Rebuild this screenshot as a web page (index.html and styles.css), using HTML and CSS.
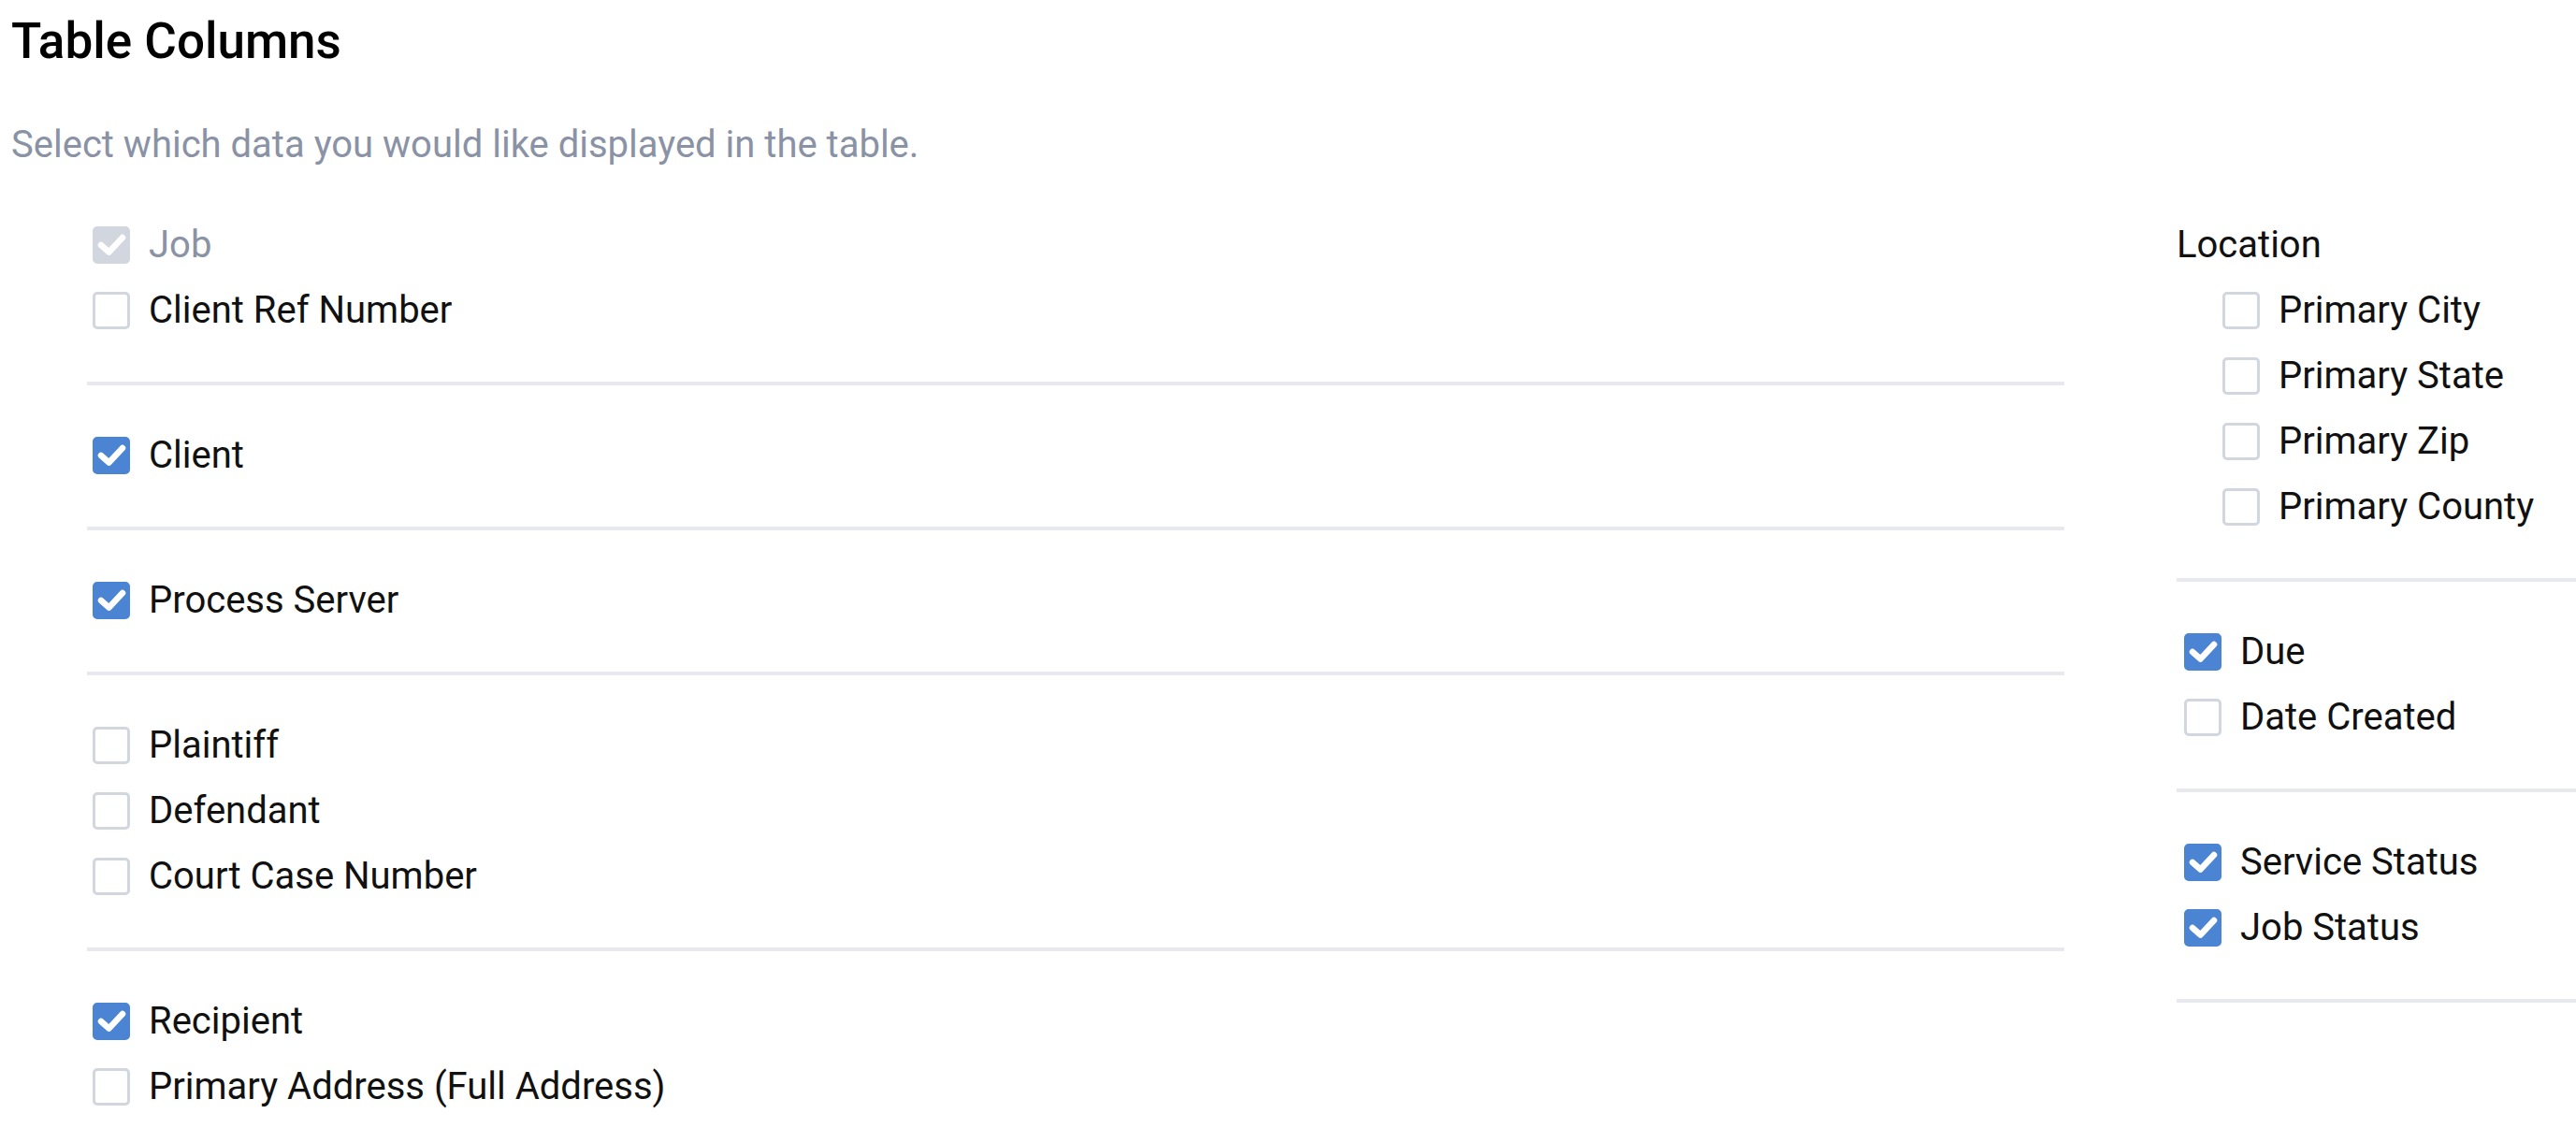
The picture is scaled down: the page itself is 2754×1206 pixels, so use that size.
FILE: index.html
```html
<!DOCTYPE html>
<html lang="en">
<head>
<meta charset="utf-8">
<title>Table Columns</title>
<link rel="stylesheet" href="styles.css">
</head>
<body>
<div class="page">
  <h1 class="title">Table Columns</h1>
  <p class="subtitle">Select which data you would like displayed in the table.</p>

  <div class="columns">
    <div class="col col-left">
      <div class="section">
        <label class="row disabled"><span class="box checked"><svg viewBox="0 0 40 40"><polyline points="9,20 17.5,27.5 32,12"/></svg></span><span class="text">Job</span></label>
        <label class="row"><span class="box"></span><span class="text">Client Ref Number</span></label>
      </div>
      <div class="section">
        <label class="row"><span class="box checked"><svg viewBox="0 0 40 40"><polyline points="9,20 17.5,27.5 32,12"/></svg></span><span class="text">Client</span></label>
      </div>
      <div class="section">
        <label class="row"><span class="box checked"><svg viewBox="0 0 40 40"><polyline points="9,20 17.5,27.5 32,12"/></svg></span><span class="text">Process Server</span></label>
      </div>
      <div class="section">
        <label class="row"><span class="box"></span><span class="text">Plaintiff</span></label>
        <label class="row"><span class="box"></span><span class="text">Defendant</span></label>
        <label class="row"><span class="box"></span><span class="text">Court Case Number</span></label>
      </div>
      <div class="section">
        <label class="row"><span class="box checked"><svg viewBox="0 0 40 40"><polyline points="9,20 17.5,27.5 32,12"/></svg></span><span class="text">Recipient</span></label>
        <label class="row"><span class="box"></span><span class="text">Primary Address (Full Address)</span></label>
      </div>
    </div>

    <div class="col col-right">
      <div class="section">
        <div class="row group-label">Location</div>
        <label class="row sub"><span class="box"></span><span class="text">Primary City</span></label>
        <label class="row sub"><span class="box"></span><span class="text">Primary State</span></label>
        <label class="row sub"><span class="box"></span><span class="text">Primary Zip</span></label>
        <label class="row sub"><span class="box"></span><span class="text">Primary County</span></label>
      </div>
      <div class="section">
        <label class="row"><span class="box checked"><svg viewBox="0 0 40 40"><polyline points="9,20 17.5,27.5 32,12"/></svg></span><span class="text">Due</span></label>
        <label class="row"><span class="box"></span><span class="text">Date Created</span></label>
      </div>
      <div class="section">
        <label class="row"><span class="box checked"><svg viewBox="0 0 40 40"><polyline points="9,20 17.5,27.5 32,12"/></svg></span><span class="text">Service Status</span></label>
        <label class="row"><span class="box checked"><svg viewBox="0 0 40 40"><polyline points="9,20 17.5,27.5 32,12"/></svg></span><span class="text">Job Status</span></label>
      </div>
    </div>
  </div>
</div>
</body>
</html>
```

FILE: styles.css
```css
html, body {
  margin: 0;
  padding: 0;
  background: #ffffff;
}

body {
  font-family: Roboto, "Liberation Sans", Arial, sans-serif;
  color: #111111;
  overflow: hidden;
}

.page {
  padding: 12px 0 0 12px;
}

.title {
  margin: 0;
  font-size: 53px;
  font-weight: 500;
  line-height: 64px;
  color: #000000;
}

.subtitle {
  margin: 49px 0 0 0;
  font-size: 40px;
  line-height: 60px;
  color: #8a92a5;
}

.columns {
  display: grid;
  grid-template-columns: 2114px 427px;
  column-gap: 120px;
  margin: 2px 0 0 81px;
  align-items: start;
}

.section {
  padding: 40px 0 41px 0;
  border-bottom: 4px solid #e8e9ee;
}

.row {
  display: flex;
  align-items: center;
  height: 70px;
  font-size: 40px;
  line-height: 70px;
  gap: 20px;
}

.col-left .row .box {
  margin-left: 6px;
}

.col-right .row .box {
  margin-left: 8px;
}

.col-right .row.sub .box {
  margin-left: 49px;
}

.group-label {
  color: #111111;
}

.box {
  flex: 0 0 auto;
  width: 40px;
  height: 40px;
  box-sizing: border-box;
  border: 3px solid #d2d6de;
  border-radius: 5px;
  background: #ffffff;
  display: flex;
  align-items: center;
  justify-content: center;
}

.box svg {
  width: 40px;
  height: 40px;
  display: block;
  flex: 0 0 auto;
}

.box svg polyline {
  fill: none;
  stroke: #ffffff;
  stroke-width: 6.5;
  stroke-linecap: round;
  stroke-linejoin: round;
}

.box.checked {
  background: #4a84d2;
  border-color: #4a84d2;
}

.disabled .box.checked {
  background: #d2d6de;
  border-color: #d2d6de;
}

.disabled .text {
  color: #8a92a5;
}
```
